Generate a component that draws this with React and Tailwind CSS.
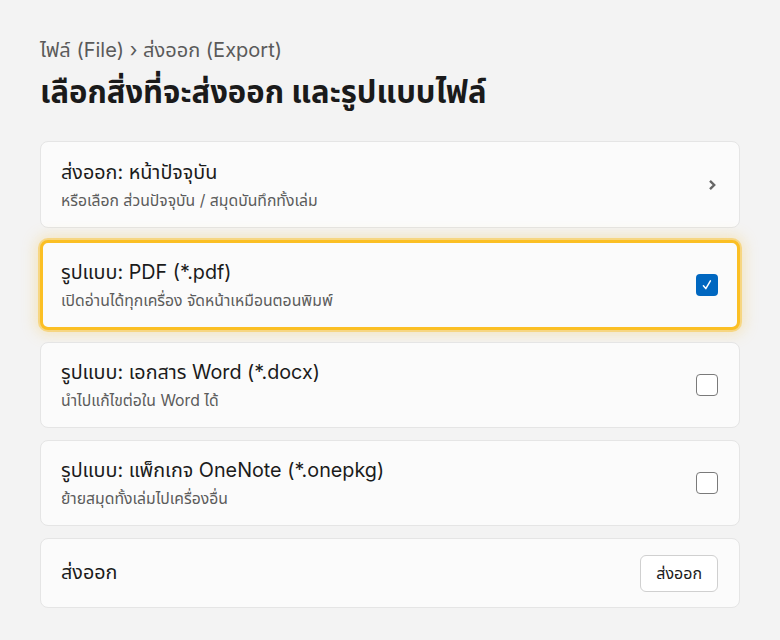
import React from "react";

const font = { fontFamily: 'Inter, "Noto Sans Thai", "Noto Sans", sans-serif' };

function Checkbox({ checked }) {
  if (checked) {
    return (
      <div className="w-[22px] h-[22px] rounded-[4px] bg-[#0067c0] flex items-center justify-center">
        <svg width="14" height="14" viewBox="0 0 14 14" fill="none">
          <path d="M3.4 7.8 L5.8 10.6 L10.4 2.8" stroke="white" strokeWidth="1.5" strokeLinecap="round" strokeLinejoin="round" />
        </svg>
      </div>
    );
  }
  return <div className="w-[22px] h-[22px] rounded-[4px] border border-[#7a7a7a] bg-white" />;
}

function Card({ title, sub, selected, right, h }) {
  return (
    <div
      className={
        "rounded-[8px] bg-[#fbfbfb] flex items-center justify-between " +
        (selected
          ? "border-[3px] border-[#fbbf24] shadow-[0_0_0_2px_rgba(251,191,36,0.45),0_0_14px_4px_rgba(245,200,90,0.35)] pl-[18px] pr-[19px] h-[90px]"
          : "border border-[#e5e5e5] pl-[20px] pr-[21px] " + (h || "h-[86px]"))
      }
    >
      <div className="flex flex-col">
        <div className="text-[19.75px] leading-[26px] text-[#1b1b1b]">{title}</div>
        <div className="text-[15.75px] leading-[20px] text-[#5c5c5c] mt-[6px]">{sub}</div>
      </div>
      {right}
    </div>
  );
}

export default function App() {
  return (
    <div className="min-h-[640px] w-full bg-[#f3f3f3] px-[40px] pt-[36px]" style={font}>
      <div className="text-[20px] leading-[28px] text-[#5a5a5a]">ไฟล์ (File) › ส่งออก (Export)</div>
      <h1 className="text-[31px] leading-[40px] font-bold text-[#1a1a1a] mt-[8px]">เลือกสิ่งที่จะส่งออก และรูปแบบไฟล์</h1>
      <div className="mt-[29px] flex flex-col gap-[12px] w-[700px]">
        <Card
          h="h-[87px]"
          title="ส่งออก: หน้าปัจจุบัน"
          sub="หรือเลือก ส่วนปัจจุบัน / สมุดบันทึกทั้งเล่ม"
          right={
            <svg width="10" height="12" viewBox="0 0 10 12" className="mr-[1px]">
              <path d="M3 1.8 L7.2 6 L3 10.2" stroke="#666666" strokeWidth="2.4" fill="none" strokeLinecap="butt" strokeLinejoin="miter" />
            </svg>
          }
        />
        <Card
          selected
          title="รูปแบบ: PDF (*.pdf)"
          sub="เปิดอ่านได้ทุกเครื่อง จัดหน้าเหมือนตอนพิมพ์"
          right={<Checkbox checked />}
        />
        <Card
          title="รูปแบบ: เอกสาร Word (*.docx)"
          sub="นำไปแก้ไขต่อใน Word ได้"
          right={<Checkbox />}
        />
        <Card
          title="รูปแบบ: แพ็กเกจ OneNote (*.onepkg)"
          sub="ย้ายสมุดทั้งเล่มไปเครื่องอื่น"
          right={<Checkbox />}
        />
        <div className="rounded-[8px] bg-[#fbfbfb] border border-[#e5e5e5] h-[70px] pl-[20px] pr-[21px] flex items-center justify-between">
          <div className="text-[19.75px] text-[#1b1b1b]">ส่งออก</div>
          <button className="h-[37px] px-[15px] rounded-[6px] border border-[#d0d0d0] bg-white text-[16px] text-[#1b1b1b]">ส่งออก</button>
        </div>
      </div>
    </div>
  );
}
